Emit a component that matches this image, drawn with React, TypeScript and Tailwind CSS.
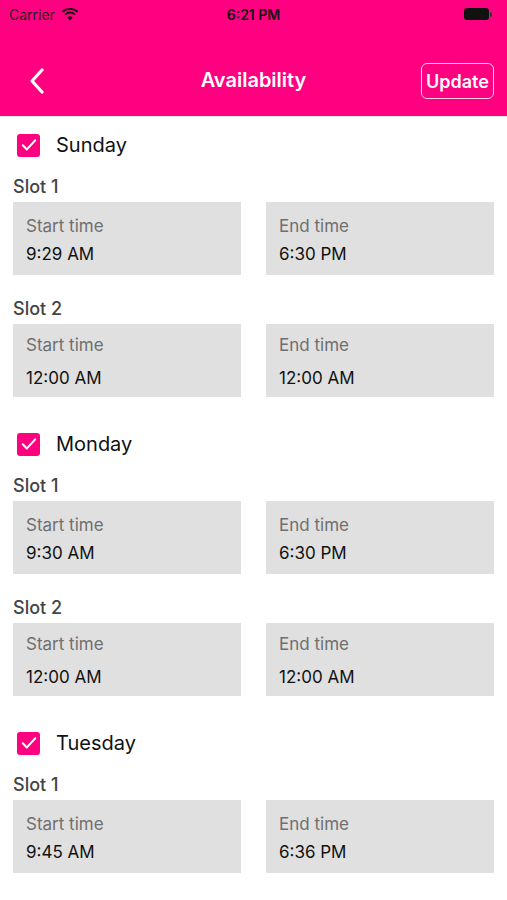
import React from 'react';

type Slot = { start: string; end: string; tight?: boolean };
type Day = { name: string; slots: Slot[] };

const days: Day[] = [
  { name: 'Sunday', slots: [{ start: '9:29 AM', end: '6:30 PM' }, { start: '12:00 AM', end: '12:00 AM', tight: true }] },
  { name: 'Monday', slots: [{ start: '9:30 AM', end: '6:30 PM' }, { start: '12:00 AM', end: '12:00 AM', tight: true }] },
  { name: 'Tuesday', slots: [{ start: '9:45 AM', end: '6:36 PM' }] },
];

const TimeBox = ({ label, value, tight }: { label: string; value: string; tight?: boolean }) => (
  <div className={`h-[73px] flex-1 bg-[#e0e0e0] pl-[13px] ${tight ? 'pt-[10px]' : 'pt-[13px]'}`}>
    <div className="text-[17px] leading-[22px] text-[#6f6f6f]">{label}</div>
    <div className={`text-[17px] leading-[22px] text-[#111] ${tight ? 'mt-[11px]' : 'mt-[6px]'}`}>{value}</div>
  </div>
);

const Checkbox = () => (
  <div className="flex h-[23px] w-[23px] items-center justify-center rounded-[3px] bg-[#ff0080]">
    <svg width="18" height="18" viewBox="0 0 16 16" fill="none">
      <path d="M2.5 8.3l3.6 3.6 7.4-8" stroke="white" strokeWidth="1.9" strokeLinecap="round" strokeLinejoin="round" />
    </svg>
  </div>
);

export default function App() {
  return (
    <div className="min-h-[900px] w-[507px] bg-white" style={{ fontFamily: 'Inter, "Noto Sans", sans-serif' }}>
      {/* header */}
      <div className="h-[117px] border-b border-[#e6e6e6] bg-[#ff0080]">
        <div className="relative flex h-[28px] items-center px-[9px]">
          <span className="text-[14px] text-[#222]">Carrier</span>
          <svg className="ml-[6px]" width="18" height="13" viewBox="0 0 18 13">
            <path d="M9 12.5l2.6-3.1a4 4 0 0 0-5.2 0z" fill="#111" />
            <path d="M9 5.6a6.6 6.6 0 0 1 4.4 1.7l1.3-1.5A8.6 8.6 0 0 0 9 3.6a8.6 8.6 0 0 0-5.7 2.2l1.3 1.5A6.6 6.6 0 0 1 9 5.6z" fill="#111" />
            <path d="M9 1.8a10.5 10.5 0 0 1 7 2.7l1.3-1.5A12.5 12.5 0 0 0 9 0 12.5 12.5 0 0 0 .7 3l1.3 1.5A10.5 10.5 0 0 1 9 1.8z" fill="#111" />
          </svg>
          <span className="absolute left-1/2 -translate-x-1/2 text-[14px] font-semibold text-[#111]">6:21 PM</span>
          <div className="ml-auto mr-[6px] flex items-center">
            <div className="h-[12px] w-[25px] rounded-[3px] bg-[#111]" />
            <div className="ml-[1px] h-[5px] w-[2px] rounded-r-sm bg-[#333]" />
          </div>
        </div>
        <div className="relative flex h-[88px] items-center px-[29px] pb-[6px] pt-[24px]">
          <svg width="16" height="26" viewBox="0 0 16 26" fill="none">
            <path d="M13 2L3 13l10 11" stroke="white" strokeWidth="3.2" strokeLinecap="round" strokeLinejoin="round" />
          </svg>
          <span className="absolute left-1/2 top-[52px] -translate-x-1/2 -translate-y-1/2 text-[20px] font-semibold text-white">Availability</span>
          <div className="ml-auto mr-[-16px] flex h-[36px] w-[73px] items-center justify-center rounded-[6px] border-[1.5px] border-[#ffd0e6] text-[18px] font-semibold text-white">
            Update
          </div>
        </div>
      </div>

      {/* days */}
      <div className="px-[13px]">
        {days.map((day) => (
          <div key={day.name} className="mb-[19px]">
            <div className="flex h-[56px] items-center pl-[4px]">
              <Checkbox />
              <span className="ml-[16px] text-[20px] text-[#111]">{day.name}</span>
            </div>
            {day.slots.map((slot, i) => (
              <div key={i} className={i === 0 ? 'mt-[3px]' : 'mt-[23px]'}>
                <div className="text-[18px] font-medium leading-[22px] text-[#444]">Slot {i + 1}</div>
                <div className="mt-[4px] flex gap-[25px]">
                  <TimeBox label="Start time" value={slot.start} tight={slot.tight} />
                  <TimeBox label="End time" value={slot.end} tight={slot.tight} />
                </div>
              </div>
            ))}
          </div>
        ))}
      </div>
    </div>
  );
}
